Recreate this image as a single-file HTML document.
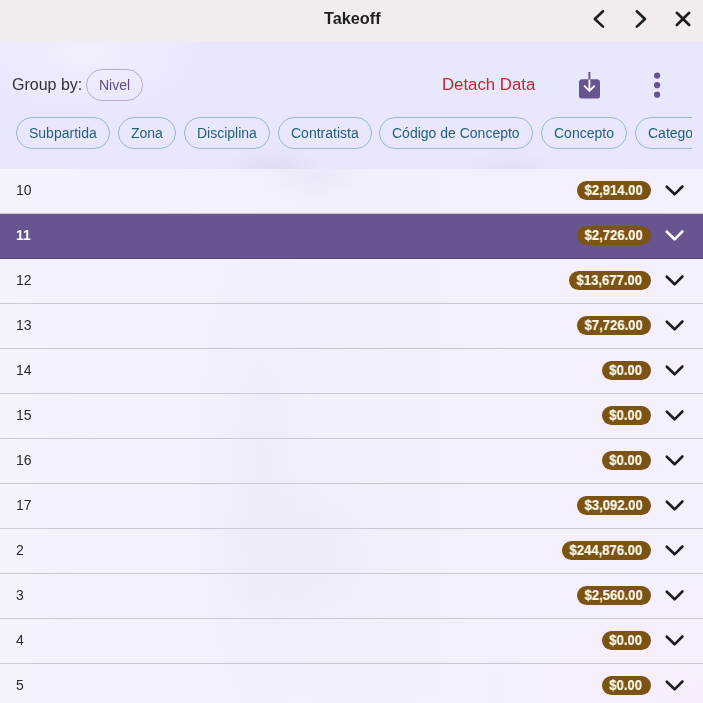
<!DOCTYPE html>
<html><head><meta charset="utf-8">
<style>
*{margin:0;padding:0;box-sizing:border-box}
html,body{-webkit-font-smoothing:antialiased;}
.t,.chip,.row .n,.badge span{will-change:transform}
html,body{width:703px;height:703px;overflow:hidden;font-family:"Liberation Sans",sans-serif;position:relative}
body{background:radial-gradient(55px 24px at 315px 176px,#eae8f9,rgba(234,232,249,0)),radial-gradient(100px 90px at 300px 555px,#ecebf8,rgba(236,235,248,0)),radial-gradient(70px 260px at 262px 470px,#efecf9,rgba(239,236,249,0)),radial-gradient(220px 160px at 680px 703px,#f8eefb,rgba(248,238,251,0)),linear-gradient(90deg,#f7f1fc 0,#f4f0fc 150px,#f3effb 350px,#f5f0fc 703px)}
.t{position:absolute;white-space:nowrap;line-height:1}
#hdr{position:absolute;left:0;top:0;width:703px;height:41px;background:#f2ebf2}
#tb{position:absolute;left:0;top:41px;width:703px;height:128px;background:radial-gradient(120px 60px at 85px 12px,#f1eefd,rgba(241,238,253,0)),radial-gradient(55px 28px at 272px 130px,#dcdcf1,rgba(220,220,241,0)),radial-gradient(50px 20px at 510px 128px,#e0dff3,rgba(224,223,243,0)),#e9e7fb;overflow:hidden}
.chip{height:32px;border-radius:16px;border:1px solid #96bacb;color:#23617a;font-size:14px;line-height:30px;padding:0 12px;white-space:nowrap;flex:none}
#chips{position:absolute;left:16px;top:76px;width:676px;height:32px;overflow:hidden;display:flex;gap:8px}
.row{position:absolute;left:0;width:703px;height:45px;border-bottom:1px solid #cdc8d0}
.row .n{position:absolute;left:16px;top:14px;font-size:14px;line-height:14px;color:#2b2b2b}
.row.sel{background:#685490;border-bottom-color:#56427a}
.row.sel .n{color:#fff;font-weight:bold}
.badge{position:absolute;right:52px;top:12px;height:19px;border-radius:10px;background:#7b5413}
.badge span{position:absolute;right:8.5px;top:2px;font-size:14.8px;line-height:15px;font-weight:bold;color:#fffbef;-webkit-text-stroke:.2px #fffbef;transform:scaleX(.885);transform-origin:right center;white-space:nowrap}
.chev{position:absolute;left:0;top:0}
</style></head><body>
<div id="hdr"></div>
<div class="t" style="left:0;width:703px;text-align:center;top:10px;font-weight:bold;font-size:16.3px;padding-left:1.5px;color:#1f1d22">Takeoff</div>
<svg style="position:absolute;left:0;top:0" width="703" height="41"><g fill="none" stroke="#1e1d21" stroke-width="2.6" stroke-linecap="round" stroke-linejoin="round"><path d="M603 11.2 L594.8 19 L603 26.6"/><path d="M636.8 11.2 L645 19 L636.8 26.6"/><path d="M676.8 12.8 L689.2 25 M689.2 12.8 L676.8 25"/></g></svg>

<div id="tb">
<div class="t" style="left:12px;top:35.5px;font-size:16px;color:#333236">Group by:</div>
<div class="chip" style="position:absolute;left:86px;top:28px;border-color:#baaacc;color:#5f4f86">Nivel</div>
<div class="t" style="left:442px;top:36px;font-size:16.8px;color:#c4262f">Detach Data</div>
<svg style="position:absolute;left:0;top:-41px" width="703" height="169">
<rect x="579" y="79.2" width="21" height="19.4" rx="3.2" fill="#67548f"/>
<path d="M589.4 72 V80" stroke="#67548f" stroke-width="1.9"/>
<path d="M589.4 79.5 V91 M584.1 85.6 L589.4 90.9 L594.7 85.6" fill="none" stroke="#fff" stroke-width="1.8"/>
<circle cx="657.1" cy="75.6" r="3.1" fill="#67548f"/><circle cx="657.1" cy="85.2" r="3.1" fill="#67548f"/><circle cx="657.1" cy="94.7" r="3.1" fill="#67548f"/>
</svg>
<div id="chips">
<div class="chip">Subpartida</div>
<div class="chip">Zona</div>
<div class="chip">Disciplina</div>
<div class="chip">Contratista</div>
<div class="chip">Código de Concepto</div>
<div class="chip">Concepto</div>
<div class="chip">Categoría</div>
</div>
</div>
<div id="rows">
<div class="row" style="top:169px"><div class="n">10</div><div class="badge" style="width:74.26px"><span>$2,914.00</span></div><svg class="chev" width="703" height="44"><path d="M666.8 17.7 L674.6 25.3 L682.4 17.5" fill="none" stroke="#1c1b1f" stroke-width="2.6" stroke-linecap="round" stroke-linejoin="round"/></svg></div>
<div class="row sel" style="top:214px"><div class="n">11</div><div class="badge" style="width:74.26px"><span>$2,726.00</span></div><svg class="chev" width="703" height="44"><path d="M666.8 17.7 L674.6 25.3 L682.4 17.5" fill="none" stroke="#fff" stroke-width="2.6" stroke-linecap="round" stroke-linejoin="round"/></svg></div>
<div class="row" style="top:259px"><div class="n">12</div><div class="badge" style="width:81.55px"><span>$13,677.00</span></div><svg class="chev" width="703" height="44"><path d="M666.8 17.7 L674.6 25.3 L682.4 17.5" fill="none" stroke="#1c1b1f" stroke-width="2.6" stroke-linecap="round" stroke-linejoin="round"/></svg></div>
<div class="row" style="top:304px"><div class="n">13</div><div class="badge" style="width:74.26px"><span>$7,726.00</span></div><svg class="chev" width="703" height="44"><path d="M666.8 17.7 L674.6 25.3 L682.4 17.5" fill="none" stroke="#1c1b1f" stroke-width="2.6" stroke-linecap="round" stroke-linejoin="round"/></svg></div>
<div class="row" style="top:349px"><div class="n">14</div><div class="badge" style="width:48.77px"><span>$0.00</span></div><svg class="chev" width="703" height="44"><path d="M666.8 17.7 L674.6 25.3 L682.4 17.5" fill="none" stroke="#1c1b1f" stroke-width="2.6" stroke-linecap="round" stroke-linejoin="round"/></svg></div>
<div class="row" style="top:394px"><div class="n">15</div><div class="badge" style="width:48.77px"><span>$0.00</span></div><svg class="chev" width="703" height="44"><path d="M666.8 17.7 L674.6 25.3 L682.4 17.5" fill="none" stroke="#1c1b1f" stroke-width="2.6" stroke-linecap="round" stroke-linejoin="round"/></svg></div>
<div class="row" style="top:439px"><div class="n">16</div><div class="badge" style="width:48.77px"><span>$0.00</span></div><svg class="chev" width="703" height="44"><path d="M666.8 17.7 L674.6 25.3 L682.4 17.5" fill="none" stroke="#1c1b1f" stroke-width="2.6" stroke-linecap="round" stroke-linejoin="round"/></svg></div>
<div class="row" style="top:484px"><div class="n">17</div><div class="badge" style="width:74.26px"><span>$3,092.00</span></div><svg class="chev" width="703" height="44"><path d="M666.8 17.7 L674.6 25.3 L682.4 17.5" fill="none" stroke="#1c1b1f" stroke-width="2.6" stroke-linecap="round" stroke-linejoin="round"/></svg></div>
<div class="row" style="top:529px"><div class="n">2</div><div class="badge" style="width:88.83px"><span>$244,876.00</span></div><svg class="chev" width="703" height="44"><path d="M666.8 17.7 L674.6 25.3 L682.4 17.5" fill="none" stroke="#1c1b1f" stroke-width="2.6" stroke-linecap="round" stroke-linejoin="round"/></svg></div>
<div class="row" style="top:574px"><div class="n">3</div><div class="badge" style="width:74.26px"><span>$2,560.00</span></div><svg class="chev" width="703" height="44"><path d="M666.8 17.7 L674.6 25.3 L682.4 17.5" fill="none" stroke="#1c1b1f" stroke-width="2.6" stroke-linecap="round" stroke-linejoin="round"/></svg></div>
<div class="row" style="top:619px"><div class="n">4</div><div class="badge" style="width:48.77px"><span>$0.00</span></div><svg class="chev" width="703" height="44"><path d="M666.8 17.7 L674.6 25.3 L682.4 17.5" fill="none" stroke="#1c1b1f" stroke-width="2.6" stroke-linecap="round" stroke-linejoin="round"/></svg></div>
<div class="row" style="top:664px"><div class="n">5</div><div class="badge" style="width:48.77px"><span>$0.00</span></div><svg class="chev" width="703" height="44"><path d="M666.8 17.7 L674.6 25.3 L682.4 17.5" fill="none" stroke="#1c1b1f" stroke-width="2.6" stroke-linecap="round" stroke-linejoin="round"/></svg></div>
</div>
</body></html>
